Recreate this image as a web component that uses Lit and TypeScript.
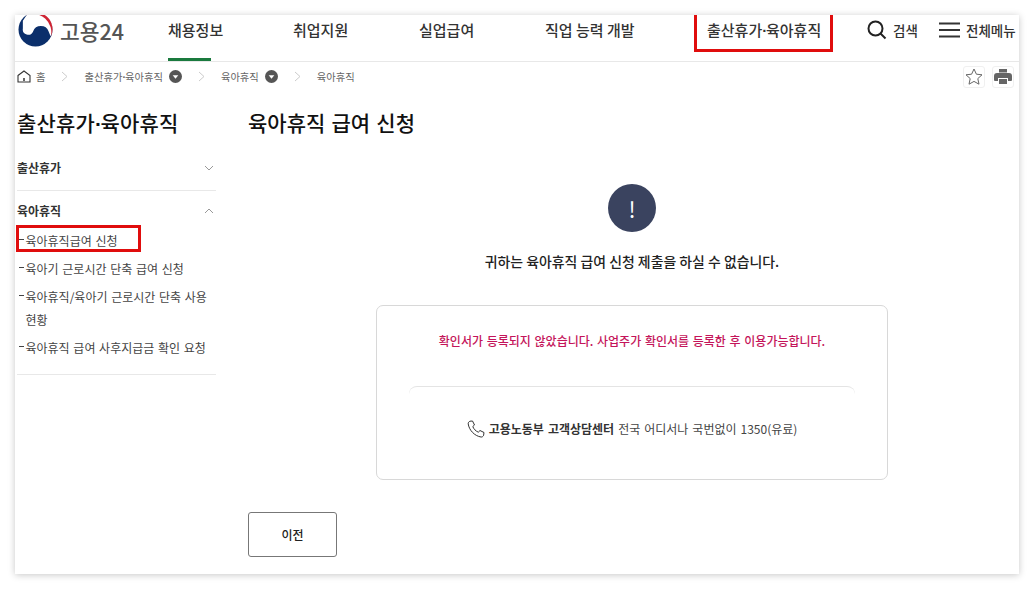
import { LitElement, html, css } from "lit";
import { customElement } from "lit/decorators.js";

const chev = html`<svg class="bc-chev" width="7" height="11" viewBox="0 0 7 11"><path d="M1 1l5 4.500-5 4.500" fill="none" stroke="#ccc" stroke-width="1"/></svg>`;
const drop = html`<svg class="drop" width="13" height="13" viewBox="0 0 13 13"><circle cx="6.500" cy="6.500" r="6.500" fill="#555"/><path d="M3.700 5.300h5.600L6.500 8.800z" fill="#fff"/></svg>`;
const dot = html`<span class="dot">·</span>`;

@customElement("app-root")
export class AppRoot extends LitElement {
  static styles = css`
    :host { display: block; width: 1034px; height: 589px; box-sizing: border-box; padding: 15px; background: #fff; font-family: "Noto Sans CJK KR", "Noto Sans", sans-serif; color: #222; overflow: hidden; }
    .card { position: relative; width: 1004px; height: 559px; background: #fff; box-shadow: 0 1px 7px rgba(0,0,0,.22); overflow: hidden; }
    .dot { font-family: "Liberation Sans", sans-serif; font-weight: 700; letter-spacing: -.08em; line-height: 0; }
    .top { height: 46px; display: flex; align-items: flex-start; border-bottom: 1px solid #e8e8e8; position: relative; }
    .logo { display: flex; align-items: center; width: 153px; height: 31px; padding-left: 3px; box-sizing: border-box; gap: 7px; flex: none; }
    .logo span { font-size: 21.500px; font-weight: 500; color: #555; line-height: 31px; }
    nav { display: flex; flex: none; }
    nav a { font-size: 15px; font-weight: 500; color: #333; line-height: 29px; height: 46px; box-sizing: border-box; white-space: nowrap; }
    nav a.active { border-bottom: 3px solid #1a7a3e; }
    .n2 { width: 126px; } .n3 { width: 126px; } .n4 { width: 162px; } .n5 { width: 160px; }
    nav a.n1.active { width: 43px; margin-right: 82px; }
    .tool { display: flex; align-items: center; gap: 6px; font-size: 13.500px; font-weight: 500; color: #333; height: 30px; white-space: nowrap; }
    .search { width: 72px; flex: none; }
    .crumbs { height: 29px; display: flex; align-items: center; font-size: 10.300px; color: #666; padding-left: 2px; white-space: nowrap; }
    .crumbs .home { margin-right: 5px; }
    .bc-chev { margin: 0 16px; }
    .drop { margin-left: 6px; }
    .crumbs .tools { margin-left: auto; display: flex; gap: 7px; padding-right: 5px; }
    .tbtn { width: 22px; height: 22px; border: 1px solid #f0f0f0; border-radius: 3px; display: flex; align-items: center; justify-content: center; box-sizing: border-box; }
    .body { display: flex; padding: 0 0 0 2px; }
    aside { width: 199px; flex: none; }
    aside h2 { margin: 0; font-size: 21px; letter-spacing: .2px; font-weight: 500; color: #111; line-height: 30px; padding-top: 16px; white-space: nowrap; }
    .sec { display: flex; justify-content: space-between; align-items: center; font-size: 12px; font-weight: 700; color: #333; line-height: 18px; }
    .sec svg { margin-right: 2px; }
    .sec1 { margin-top: 22px; padding-bottom: 13px; border-bottom: 1px solid #e8e8e8; }
    .sec2 { margin-top: 11px; }
    .items { list-style: none; margin: 0; padding: 6px 0 13px; border-bottom: 1px solid #e8e8e8; }
    .items li { font-size: 12px; word-spacing: 1px; color: #444; line-height: 23px; padding: 2.500px 0 2.500px 8.500px; position: relative; }
    .items li::before { content: ""; position: absolute; left: 2px; top: 13px; width: 5px; height: 1px; background: #444; }
    main { margin-left: 32px; flex: 1; }
    main h1 { margin: 0; font-size: 21px; word-spacing: 1.500px; font-weight: 500; color: #111; line-height: 30px; padding-top: 16px; }
    .alert { width: 48px; height: 48px; border-radius: 50%; background: #3a435f; color: #fff; margin: 47px 0 0 360px; display: flex; align-items: center; justify-content: center; font-size: 22px; font-weight: 400; line-height: 1; }
    .msg { width: 768px; text-align: center; margin: 18px 0 0 0; font-size: 13.900px; font-weight: 500; color: #222; line-height: 22px; }
    .box { width: 512px; height: 175px; margin: 33px 0 0 128px; border: 1px solid #d8d8d8; border-radius: 7px; box-sizing: border-box; text-align: center; }
    .warn { color: #c4145a; font-size: 12px; word-spacing: 1px; font-weight: 500; line-height: 20px; padding-top: 25px; height: 80px; box-sizing: border-box; }
    .divider { margin: 0 32px; height: 20px; border-top: 1px solid #e4e4e4; border-radius: 8px 8px 0 0; }
    .tel { display: flex; justify-content: center; align-items: center; gap: 4px; font-size: 12px; word-spacing: 1.300px; color: #444; margin-top: 12px; line-height: 20px; }
    .tel b { font-weight: 700; color: #333; }
    .prev { width: 89px; height: 45px; margin-top: 32px; border: 1px solid #777; border-radius: 3px; background: #fff; font: 500 12px "Noto Sans CJK KR", sans-serif; color: #222; display: block; }
    .mark { position: absolute; border: 3px solid #e00d0d; box-sizing: border-box; pointer-events: none; }
    .m1 { left: 679px; top: -4px; width: 139px; height: 41px; }
    .m2 { left: 1px; top: 210px; width: 125px; height: 27px; }
  `;

  render() {
    return html`<div class="card">
      <div class="top">
        <div class="logo">
          <svg width="35" height="35" viewBox="0 0 36 36" style="margin-top:-2px">
            <circle cx="18" cy="18" r="17.500" fill="#0b2f6b"/>
            <path d="M5 9L9 3A17 17 0 0 1 33.500 25L31.500 20A8.500 8.500 0 0 0 15.500 20A5.500 5.500 0 0 1 5 17z" fill="#fff"/>
            <path d="M8 3.500A17.500 17.500 0 0 1 33.500 26A18.800 18.800 0 0 0 8 3.500z" fill="#cf2433"/>
          </svg>
          <span>고용24</span>
        </div>
        <nav>
          <a class="n1 active">채용정보</a>
          <a class="n2">취업지원</a>
          <a class="n3">실업급여</a>
          <a class="n4">직업 능력 개발</a>
          <a class="n5">출산휴가${dot}육아휴직</a>
        </nav>
        <div class="tool search">
          <svg width="20" height="20" viewBox="0 0 20 20"><circle cx="8.500" cy="8.500" r="7" fill="none" stroke="#222" stroke-width="2"/><path d="M13.500 13.500l5 5" stroke="#222" stroke-width="2"/></svg>
          검색
        </div>
        <div class="tool">
          <svg width="21" height="16" viewBox="0 0 21 16"><path d="M0 1.500h21M0 8h21M0 14.500h21" stroke="#333" stroke-width="2"/></svg>
          전체메뉴
        </div>
      </div>
      <div class="crumbs">
        <svg class="home" width="14" height="13" viewBox="0 0 14 13"><path d="M1 5.500L7 1l6 4.500V12H1z" fill="none" stroke="#333" stroke-width="1.100"/><path d="M7 8v3" stroke="#333" stroke-width="1.500"/></svg>
        <span>홈</span>${chev}
        <span>출산휴가${dot}육아휴직</span>${drop}${chev}
        <span>육아휴직</span>${drop}${chev}
        <span>육아휴직</span>
        <div class="tools">
          <div class="tbtn"><svg width="18" height="17" viewBox="0 0 18 17"><path d="M9 1l2.400 5.200 5.600.6-4.200 3.800 1.200 5.600L9 13.400 4 16.200l1.200-5.600L1 6.800l5.600-.6z" fill="none" stroke="#666" stroke-width="1"/></svg></div>
          <div class="tbtn"><svg width="18" height="17" viewBox="0 0 18 17"><path d="M5 1h8v3.500H5z" fill="#666"/><path d="M3 5h12a3 3 0 0 1 3 3v4a1 1 0 0 1-1 1h-3V10H4v3H1a1 1 0 0 1-1-1V8a3 3 0 0 1 3-3z" fill="#666"/><path d="M5 11h8v5H5z" fill="#666"/></svg></div>
        </div>
      </div>
      <div class="body">
        <aside>
          <h2>출산휴가${dot}육아휴직</h2>
          <div class="sec sec1">출산휴가<svg width="10" height="6" viewBox="0 0 10 6"><path d="M1 1l4 4 4-4" fill="none" stroke="#999"/></svg></div>
          <div class="sec sec2">육아휴직<svg width="10" height="6" viewBox="0 0 10 6"><path d="M1 5l4-4 4 4" fill="none" stroke="#999"/></svg></div>
          <ul class="items">
            <li>육아휴직급여 신청</li>
            <li>육아기 근로시간 단축 급여 신청</li>
            <li>육아휴직/육아기 근로시간 단축 사용 현황</li>
            <li>육아휴직 급여 사후지급금 확인 요청</li>
          </ul>
        </aside>
        <main>
          <h1>육아휴직 급여 신청</h1>
          <div class="alert">!</div>
          <p class="msg">귀하는 육아휴직 급여 신청 제출을 하실 수 없습니다.</p>
          <div class="box">
            <div class="warn">확인서가 등록되지 않았습니다. 사업주가 확인서를 등록한 후 이용가능합니다.</div>
            <div class="divider"></div>
            <div class="tel">
              <svg width="18" height="18" viewBox="0 0 18 18"><path d="M3 1.200L5.500 1l2 4-1.700 1.500c.8 2.400 2.900 4.600 5.500 5.700L13 10.500l4 2-.4 2.800c-.3 1.100-1.500 1.900-2.600 1.700C7.500 16 2 10 1.200 3.800 1.100 2.600 2 1.500 3 1.200z" fill="none" stroke="#333" stroke-width="1"/></svg>
              <span><b>고용노동부 고객상담센터</b> 전국 어디서나 국번없이 1350(유료)</span>
            </div>
          </div>
          <button class="prev">이전</button>
        </main>
      </div>
      <div class="mark m1"></div>
      <div class="mark m2"></div>
    </div>`;
  }
}
